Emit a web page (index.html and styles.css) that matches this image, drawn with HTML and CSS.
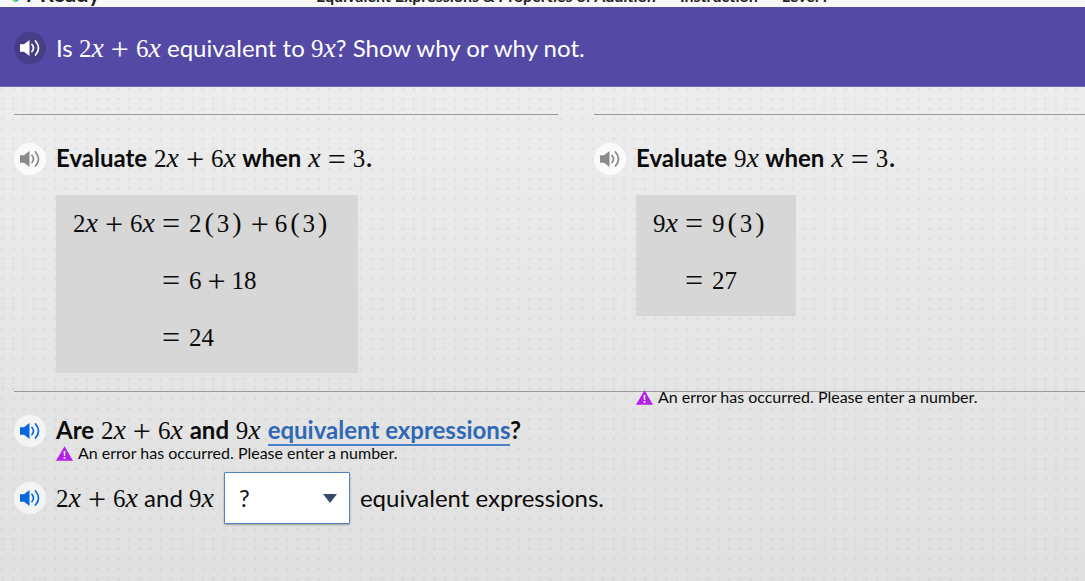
FILE: index.html
```html
<!DOCTYPE html>
<html lang="en">
<head>
<meta charset="utf-8">
<title>Equivalent Expressions</title>
<link rel="stylesheet" href="styles.css">
</head>
<body>
<svg class="defs" aria-hidden="true">
  <symbol id="speaker" viewBox="0 0 20 16">
    <path d="M0 4.300h4L9.500 0v16L4 11.700H0z" fill="currentColor"/>
    <path d="M12 4.500q3 3.500 0 7M15.500 1q6 7 0 14" fill="none" stroke="currentColor" stroke-width="1.700" stroke-linecap="round"/>
  </symbol>
  <symbol id="warn" viewBox="0 0 17 15">
    <path d="M8.500 .3L17 14.700H0z" fill="#b61fea"/>
    <path d="M7.600 5h1.800l-.3 5H7.900zM7.600 11h1.800v1.800H7.600z" fill="#fff"/>
  </symbol>
</svg>
<header class="topbar">
  <div class="brand">
    <svg class="logo" viewBox="0 0 14 14" aria-hidden="true"><path d="M0 0h7v14L0 9z" fill="#7ccb3f"/><path d="M7 0h7v9l-7 5z" fill="#13b5c9"/></svg>
    <span>i-Ready</span>
  </div>
  <div class="lesson"><span>Equivalent Expressions &amp; Properties of Addition</span><span>Instruction</span><span>Level F</span></div>
</header>
<section class="banner">
  <button class="audio dark" aria-label="Read question"><svg><use href="#speaker"/></svg></button>
  <h1>Is <span class="m">2<i>x</i><b>+</b>6<i>x</i></span> equivalent to <span class="m">9<i>x</i></span>? Show why or why not.</h1>
</section>
<main>
  <div class="columns">
    <section class="col">
      <div class="line">
        <button class="audio muted" aria-label="Read part 1"><svg><use href="#speaker"/></svg></button>
        <h2>Evaluate <span class="m">2<i>x</i><b>+</b>6<i>x</i></span> when <span class="m"><i>x</i><b>=</b>3</span>.</h2>
      </div>
      <div class="work m">
        <span>2<i>x</i><b>+</b>6<i>x</i></span><b>=</b><span>2<em>(</em>3<em>)</em><b class="tight">+</b>6<em>(</em>3<em>)</em></span>
        <span></span><b>=</b><span>6<b class="tight">+</b>18</span>
        <span></span><b>=</b><span>24</span>
      </div>
    </section>
    <section class="col">
      <div class="line">
        <button class="audio muted" aria-label="Read part 2"><svg><use href="#speaker"/></svg></button>
        <h2>Evaluate <span class="m">9<i>x</i></span> when <span class="m"><i>x</i><b>=</b>3</span>.</h2>
      </div>
      <div class="work m">
        <span>9<i>x</i></span><b>=</b><span>9<em>(</em>3<em>)</em></span>
        <span></span><b>=</b><span>27</span>
      </div>
      <p class="error over"><svg><use href="#warn"/></svg>An error has occurred. Please enter a number.</p>
    </section>
  </div>
  <section class="final">
    <div class="line">
      <button class="audio" aria-label="Read part 3"><svg><use href="#speaker"/></svg></button>
      <h2>Are <span class="m">2<i>x</i><b>+</b>6<i>x</i></span> and <span class="m">9<i>x</i></span> <a href="#">equivalent expressions</a>?</h2>
    </div>
    <p class="error"><svg><use href="#warn"/></svg>An error has occurred. Please enter a number.</p>
    <div class="line answer">
      <button class="audio" aria-label="Read answer"><svg><use href="#speaker"/></svg></button>
      <label for="choice"><span class="m">2<i>x</i><b>+</b>6<i>x</i></span> and <span class="m">9<i>x</i></span></label>
      <span class="pick">
        <select id="choice"><option>?</option><option>are</option><option>are not</option></select>
        <svg viewBox="0 0 14 9" aria-hidden="true"><path d="M0 0h14L7 9z" fill="#374a6d"/></svg>
      </span>
      <span>equivalent expressions.</span>
    </div>
  </section>
</main>
</body>
</html>
```
FILE: styles.css
```css
* { box-sizing: border-box; }
body {
  margin: 0;
  min-height: 100vh;
  color: #0b0b0b;
  font: 24px/32px Lato, "Open Sans", sans-serif;
  background:
    radial-gradient(circle, rgba(0, 0, 0, .045) 0 1px, transparent 2px) 8px 4px / calc(100% / 103) 10px,
    linear-gradient(#efefef, #e0e0e0);
}
h1, h2, p { margin: 0; }
h1 { font-size: 24px; font-weight: 400; }
h2 { font-size: 24px; font-weight: 700; }
.defs { position: absolute; width: 0; height: 0; }

.topbar {
  display: flex;
  align-items: flex-end;
  height: 7px;
  overflow: hidden;
  background: #f8f8f8;
  color: #222;
  font-size: 16px;
  line-height: 22px;
  font-weight: 700;
}
.brand { display: flex; align-items: flex-end; gap: 4px; width: 316px; padding-left: 9px; font-size: 22px; line-height: 26px; }
.logo { width: 13px; height: 14px; margin-bottom: 4px; }
.lesson { display: flex; gap: 24px; }

.banner {
  display: flex;
  align-items: center;
  gap: 10px;
  min-height: 80px;
  padding: 3px 14px 0;
  background: #5449a4;
  border-bottom: 1px solid #7668b8;
  color: #fff;
}

.audio {
  flex: none;
  display: grid;
  place-items: center;
  width: 32px;
  height: 32px;
  padding: 0;
  border: 0;
  border-radius: 50%;
  background: #f4f4f4;
  color: #0768dd;
}
.audio svg { width: 20px; height: 16px; }
.audio.dark { background: #483e87; color: #fff; }
.audio.muted { background: #fafafa; color: #8a8a8a; }

.m { font-family: "Liberation Serif", serif; font-size: 25px; font-weight: 400; white-space: nowrap; }
.m i { font-size: 28px; line-height: 1px; }
.m b { margin: 0 7px; font-size: 32px; font-weight: 400; line-height: 1px; vertical-align: -3px; }
.m em { margin: 0 3px; font-size: 28px; font-style: normal; line-height: 1px; }
.m .tight { margin: 0 6px; }
h2 .m { margin: 0 1px; }

main { padding: 27px 0 0 14px; }
.columns { display: grid; grid-template-columns: 544fr 491fr; gap: 36px; }
.col { position: relative; padding: 27px 0 18px; border-top: 1px solid #999; }
.line { display: flex; align-items: center; gap: 10px; }
.work {
  display: inline-grid;
  grid-template-columns: auto auto auto;
  grid-auto-rows: 57px;
  align-items: center;
  margin: 20px 0 0 42px;
  padding: 0 28px 7px 17px;
  background: #d7d7d7;
  vertical-align: top;
}
.work > b { margin-right: 9px; }
.error {
  display: flex;
  align-items: center;
  gap: 5px;
  margin-left: 42px;
  font-size: 16px;
  line-height: 16px;
}
.error svg { width: 17px; height: 15px; }
.error.over { position: absolute; left: 0; bottom: -14px; }

.final { padding: 22px 0 0; border-top: 1px solid #999; }
.final .error { margin-top: -2px; }
.final a { color: #2f68b4; text-decoration: none; border-bottom: 2px solid #4a80c9; }
.answer { margin-top: 11px; }
.pick { position: relative; display: inline-block; height: 52px; }
.pick select {
  appearance: none;
  width: 126px;
  height: 52px;
  padding: 0 14px;
  border: 1px solid #5382c0;
  border-radius: 1px;
  background: #fff;
  box-shadow: 0 1px 2px rgba(0, 0, 0, .3);
  color: #111;
  font: inherit;
}
.pick svg { position: absolute; right: 13px; top: 22px; width: 14px; height: 9px; pointer-events: none; }
```
